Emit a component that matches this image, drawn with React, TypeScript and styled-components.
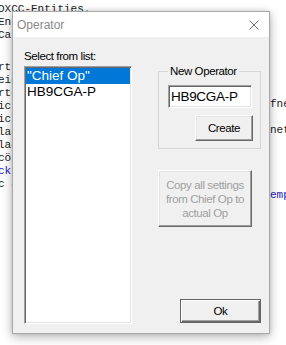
import React from "react";
import styled, { createGlobalStyle } from "styled-components";

const Global = createGlobalStyle`
  html, body { margin: 0; padding: 0; background: #fff; }
  body { width: 286px; height: 345px; overflow: hidden; }
`;

const UI_FONT = `"Liberation Sans", Arial, sans-serif`;

const Desktop = styled.div`
  position: relative;
  width: 286px;
  height: 345px;
  overflow: hidden;
  background: #fff;
  display: flex;
  justify-content: space-between;
`;

const CodeColumn = styled.pre<{ $top: number; $width: number; $offset: number }>`
  margin: 0;
  padding-top: ${(p) => p.$top}px;
  width: ${(p) => p.$width}px;
  overflow: hidden;
  font-family: "Liberation Mono", "Courier New", monospace;
  font-size: 11px;
  line-height: 13px;
  color: #1a1a1a;
  white-space: pre;
  text-indent: ${(p) => p.$offset}px;
`;

const CodeBlock = styled.div<{ $gap?: number }>`
  margin-top: ${(p) => p.$gap ?? 0}px;
`;

const CodeLine = styled.div<{ $blue?: boolean }>`
  height: 13px;
  color: ${(p) => (p.$blue ? "#2323b8" : "#1a1a1a")};
`;

const Dialog = styled.div`
  position: absolute;
  left: 12px;
  top: 11px;
  width: 258px;
  height: 323px;
  box-sizing: border-box;
  border: 1px solid #a8a8a8;
  background: #fff;
  display: flex;
  flex-direction: column;
  box-shadow: 0 3px 10px rgba(0, 0, 0, 0.28), 0 0 4px rgba(0, 0, 0, 0.12);
`;

const TitleBar = styled.div`
  height: 25px;
  flex: none;
  display: flex;
  align-items: center;
  justify-content: space-between;
  padding: 0 10px 0 4px;
  background: #fff;
`;

const Title = styled.span`
  font-family: "Liberation Sans", Arial, sans-serif;
  font-size: 12px;
  color: #8a8a8a;
`;

const CloseIcon = styled.svg`
  width: 10px;
  height: 10px;
  display: block;
`;

const Body = styled.div`
  flex: 1;
  background: #f0f0f0;
  display: grid;
  grid-template-columns: 108px 103px;
  column-gap: 26px;
  padding: 12px 8px 9px 11px;
  min-height: 0;
`;

const Column = styled.div`
  display: flex;
  flex-direction: column;
  min-height: 0;
`;

const Label = styled.div`
  font-family: ${UI_FONT};
  font-size: 11.5px;
  letter-spacing: -0.4px;
  line-height: 14px;
  color: #000;
`;

const ListBox = styled.div`
  margin-top: 3px;
  flex: 1;
  background: #fff;
  border: 1px solid;
  border-color: #a0a0a0 #fff #fff #a0a0a0;
  box-shadow: inset 1px 1px #696969, inset -1px -1px #e3e3e3;
  padding: 1px;
  display: flex;
  flex-direction: column;
`;

const ListItem = styled.div<{ $selected?: boolean }>`
  height: 16px;
  padding-left: 1px;
  font-family: "Liberation Sans", Arial, sans-serif;
  font-size: 13.5px;
  line-height: 16px;
  white-space: nowrap;
  color: ${(p) => (p.$selected ? "#fff" : "#000")};
  background: ${(p) => (p.$selected ? "#0078d7" : "transparent")};
`;

const Group = styled.fieldset`
  margin: 15px 0 0 0;
  padding: 0 0 7px 0;
  border: 1px solid #d5d5d5;
  display: flex;
  flex-direction: column;
  min-width: 0;
`;

const Legend = styled.legend`
  margin-left: 9px;
  padding: 0 2px;
  font-family: ${UI_FONT};
  font-size: 11.5px;
  letter-spacing: -0.4px;
  line-height: 14px;
  color: #000;
`;

const TextInput = styled.div`
  margin: 7px 0 0 9px;
  width: 84px;
  height: 23px;
  box-sizing: border-box;
  background: #fff;
  border: 1px solid;
  border-color: #a0a0a0 #fff #fff #a0a0a0;
  box-shadow: inset 1px 1px #696969, inset -1px -1px #e3e3e3;
  padding-left: 2px;
  display: flex;
  align-items: center;
  font-family: "Liberation Sans", Arial, sans-serif;
  font-size: 13.5px;
  letter-spacing: -0.3px;
  color: #000;
`;

const Button = styled.div<{ $w: number; $h: number; $disabled?: boolean; $default?: boolean }>`
  width: ${(p) => p.$w}px;
  height: ${(p) => p.$h}px;
  box-sizing: border-box;
  background: #f0f0f0;
  display: flex;
  align-items: center;
  justify-content: center;
  text-align: center;
  font-family: ${UI_FONT};
  font-size: 11.5px;
  letter-spacing: -0.4px;
  line-height: 14px;
  color: ${(p) => (p.$disabled ? "#a0a0a0" : "#000")};
  border: 1px solid;
  border-color: ${(p) => (p.$default ? "#646464" : "#fff #696969 #696969 #fff")};
  box-shadow: ${(p) =>
    p.$default
      ? "inset 1px 1px #fff, inset -1px -1px #696969, inset -2px -2px #a0a0a0"
      : "inset -1px -1px #a0a0a0, inset 1px 1px #e3e3e3"};
`;

const CreateButton = styled(Button)`
  margin: 7px 7px 0 0;
  align-self: flex-end;
`;

const CopyButton = styled(Button)`
  margin-top: 21px;
`;

const OkButton = styled(Button)`
  margin-top: auto;
  margin-bottom: 1px;
  align-self: flex-end;
`;

const leftTop = ["DXCC-Entities.", "Ent", "Cal"];
const leftBottom: { t: string; blue?: boolean }[] = [
  { t: "rt" },
  { t: "eie" },
  { t: "rte" },
  { t: "icr" },
  { t: "icr" },
  { t: "lac" },
  { t: "lac" },
  { t: "c\u00f6l" },
  { t: "ckt", blue: true },
  { t: "c a" },
];

export default function App() {
  return (
    <>
      <Global />
      <Desktop>
        <CodeColumn $top={3} $width={120} $offset={-2}>
          <CodeBlock>
            {leftTop.map((l, i) => (
              <CodeLine key={i}>{l}</CodeLine>
            ))}
          </CodeBlock>
          <CodeBlock $gap={19}>
            {leftBottom.map((l, i) => (
              <CodeLine key={i} $blue={l.blue}>
                {l.t}
              </CodeLine>
            ))}
          </CodeBlock>
        </CodeColumn>
        <CodeColumn $top={98} $width={16} $offset={0}>
          <CodeLine>fne</CodeLine>
          <CodeLine> </CodeLine>
          <CodeLine>net</CodeLine>
          <CodeLine> </CodeLine>
          <CodeLine> </CodeLine>
          <CodeLine> </CodeLine>
          <CodeLine> </CodeLine>
          <CodeLine $blue>emp</CodeLine>
        </CodeColumn>

        <Dialog>
          <TitleBar>
            <Title>Operator</Title>
            <CloseIcon viewBox="0 0 10 10">
              <path d="M0.5 0.5 L9.5 9.5 M9.5 0.5 L0.5 9.5" stroke="#6e6e6e" strokeWidth="1" fill="none" />
            </CloseIcon>
          </TitleBar>
          <Body>
            <Column>
              <Label>Select from list:</Label>
              <ListBox>
                <ListItem $selected>"Chief Op"</ListItem>
                <ListItem>HB9CGA-P</ListItem>
              </ListBox>
            </Column>
            <Column>
              <Group>
                <Legend>New Operator</Legend>
                <TextInput>HB9CGA-P</TextInput>
                <CreateButton $w={58} $h={26}>Create</CreateButton>
              </Group>
              <CopyButton $w={94} $h={57} $disabled>
                Copy all settings
                <br />
                from Chief Op to
                <br />
                actual Op
              </CopyButton>
              <OkButton $w={81} $h={24} $default>Ok</OkButton>
            </Column>
          </Body>
        </Dialog>
      </Desktop>
    </>
  );
}
